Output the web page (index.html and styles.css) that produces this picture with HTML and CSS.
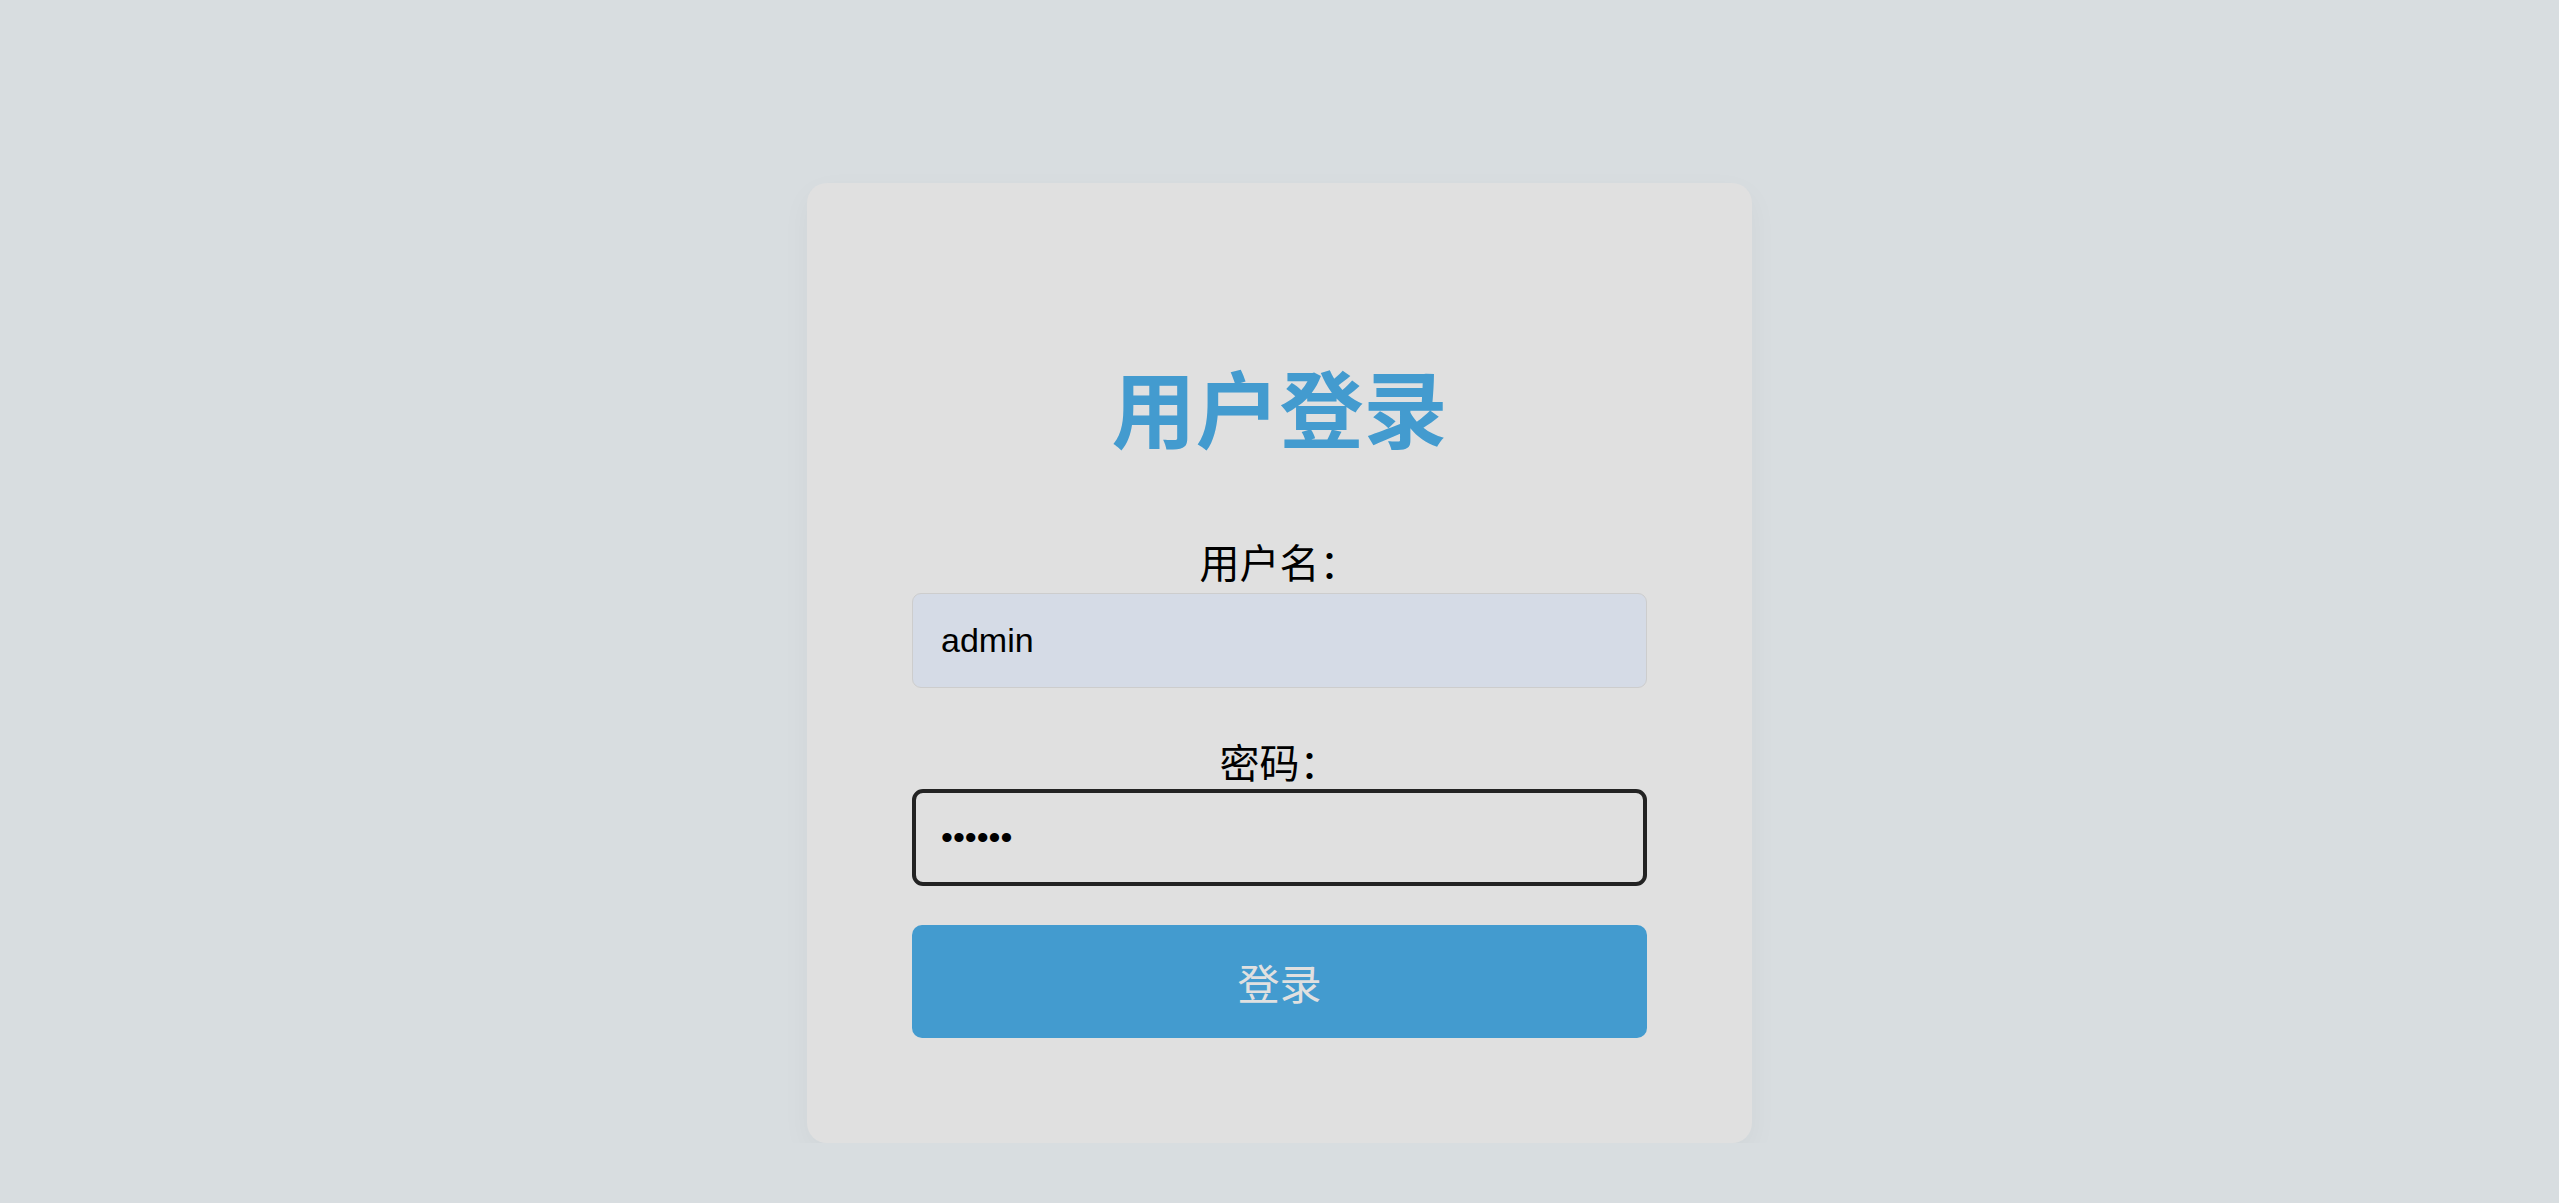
FILE: index.html
```html
<!DOCTYPE html>
<html>
<head>
<meta charset="utf-8">
<title>用户登录</title>
<link rel="stylesheet" href="styles.css">
</head>
<body>
<div class="login-box">
  <h2 class="title">用户登录</h2>
  <form class="login-form" onsubmit="return false">
    <div class="field">
      <label for="username">用户名：</label>
      <input type="text" id="username" class="input autofilled" value="admin">
    </div>
    <div class="field">
      <label for="password">密码：</label>
      <input type="password" id="password" class="input focused" value="123456">
    </div>
    <button type="submit" class="btn-login">登录</button>
  </form>
</div>
</body>
</html>
```

FILE: styles.css
```css
html, body {
  margin: 0;
  padding: 0;
  }
body {
  background-color: #d8dde0;
  font-family: "Liberation Sans", "Noto Sans CJK SC", sans-serif;
  padding-top: 183px;
  }
.login-box {
  box-sizing: border-box;
  width: 945px;
  margin: 0 auto;
  padding: 105px;
  background-color: #e0e0e0;
  border-radius: 20px;
  box-shadow: 0 10px 30px rgba(0, 0, 0, 0.04);
  }
.title {
  margin: 83px 0 89px 0;
  font-size: 84px;
  line-height: 84px;
  font-weight: bold;
  color: #439bcf;
  text-align: center;
  }
.field {
  margin-bottom: 56px;
  }
.field:last-of-type {
  margin-bottom: 39px;
  }
.field label {
  display: block;
  margin-bottom: 9px;
  font-size: 40px;
  line-height: 40px;
  color: #000;
  text-align: center;
  }
.input {
  box-sizing: border-box;
  display: block;
  width: 100%;
  height: 95px;
  padding: 0 28px;
  font-family: "Liberation Sans", sans-serif;
  font-size: 34px;
  color: #000;
  background-color: #e0e0e0;
  border: 1px solid #cdcdcd;
  border-radius: 9px;
  outline: none;
  }
.input.autofilled {
  background-color: #d5dbe6;
  }
.input.focused {
  height: 97px;
  margin-top: -4px;
  padding-left: 25px;
  border: 4px solid #232323;
  border-radius: 11px;
  }
.btn-login {
  display: block;
  width: 100%;
  height: 113px;
  font-family: "Liberation Sans", "Noto Sans CJK SC", sans-serif;
  font-size: 42px;
  color: #e0e0e0;
  background-color: #439bcf;
  border: none;
  border-radius: 10px;
  cursor: pointer;
  }
```
